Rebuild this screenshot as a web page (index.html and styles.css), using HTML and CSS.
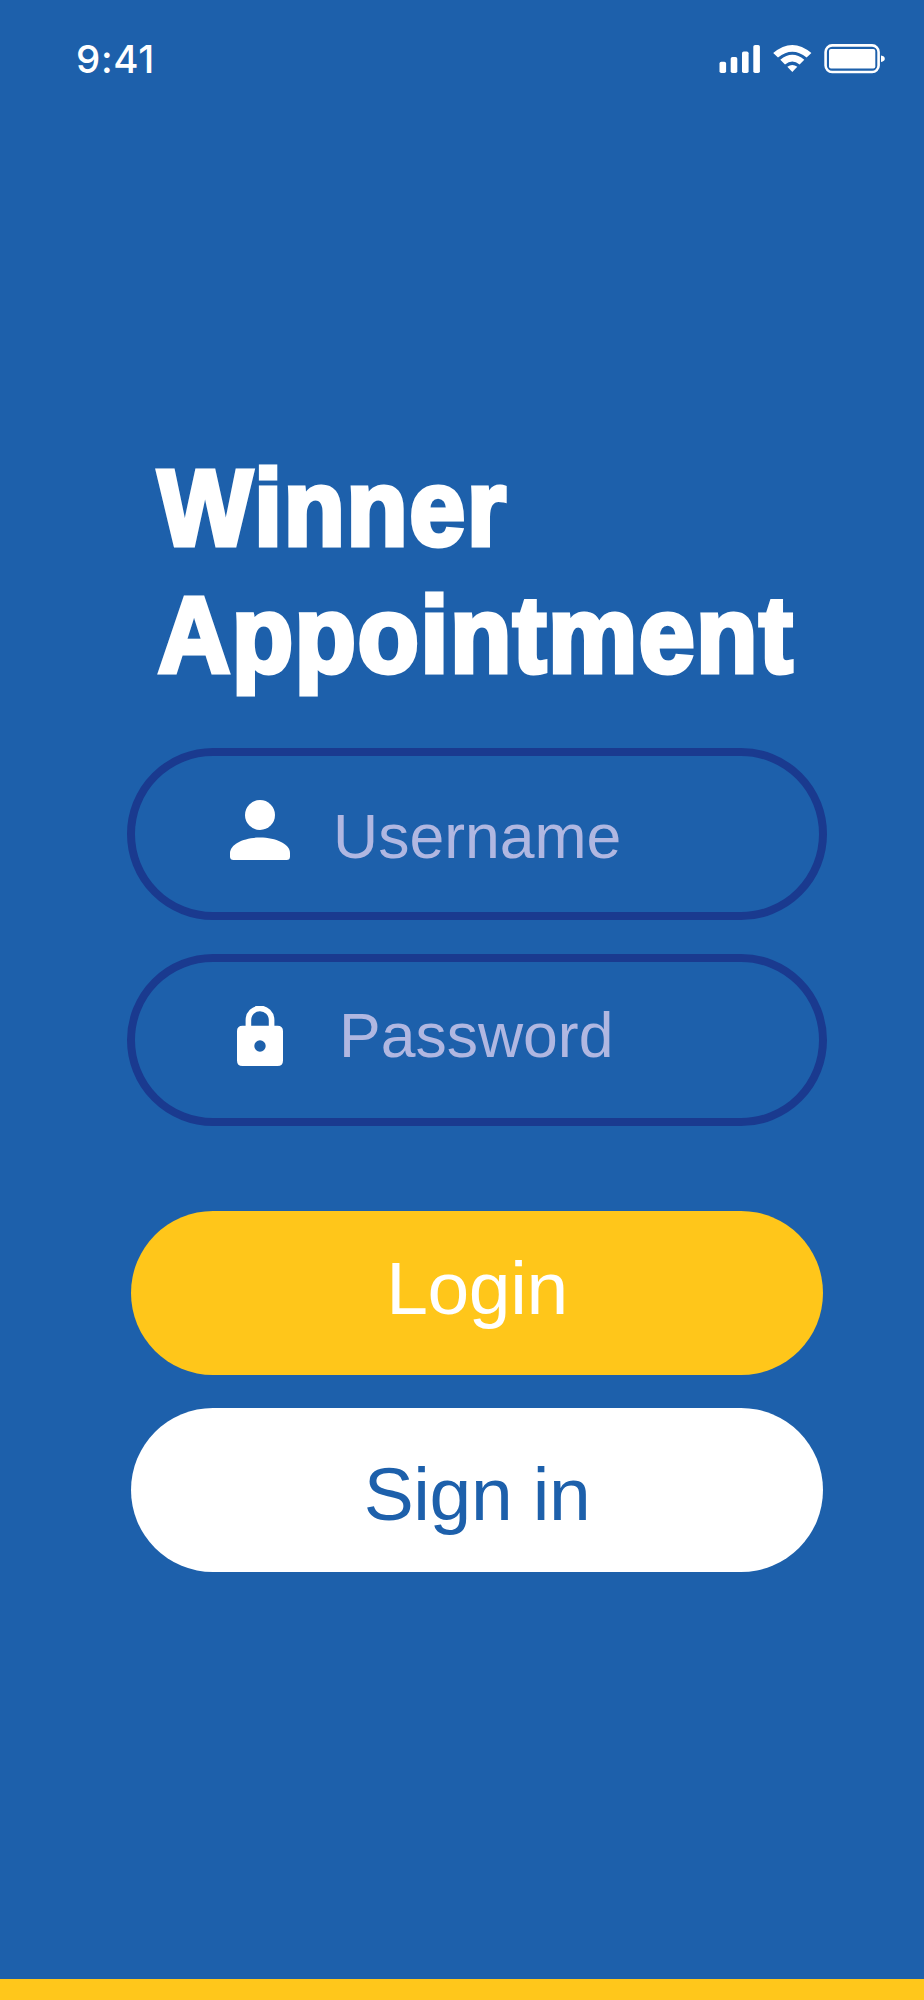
FILE: index.html
```html
<!DOCTYPE html>
<html lang="en">
<head>
  <meta charset="UTF-8" />
  <meta name="viewport" content="width=device-width, initial-scale=1.0" />
  <title>Winner Appointment</title>
  <link rel="stylesheet" href="styles.css">
</head>
<body>
  <div class="screen">
    <header class="status-bar">
      <span class="time">9:41</span>
      <svg class="status-icons" width="168" height="32" viewBox="0 0 168 32" fill="#fff">
        <!-- signal -->
        <rect x="1.5" y="18.7" width="6.6" height="11.3" rx="1.8" />
        <rect x="12.7" y="14" width="6.6" height="16" rx="1.8" />
        <rect x="24" y="8.5" width="6.6" height="21.5" rx="1.8" />
        <rect x="35.3" y="2" width="6.6" height="28" rx="1.8" />
        <!-- wifi -->
        <path d="M55.2 10 Q74.3 -6.2 93.4 10 L88.6 14.6 Q74.3 2.8 60 14.6 Z" />
        <path d="M62.3 16.7 Q74.3 7 86.3 16.7 L81.6 21.4 Q74.3 15.8 67 21.4 Z" />
        <path d="M69.3 23.8 Q74.3 20.2 79.3 23.8 L74.3 29 Z" />
        <!-- battery -->
        <rect x="107.6" y="2.4" width="53" height="26.6" rx="6.5" fill="none" stroke="#fff" stroke-width="2.6" />
        <rect x="111" y="6" width="46.3" height="19.4" rx="2" />
        <path d="M163 12.6 Q166.8 13.2 166.8 15.8 Q166.8 18.4 163 19 Z" />
      </svg>
    </header>

    <h1 class="title">
      <span class="line">Winner</span>
      <span class="line">Appointment</span>
    </h1>

    <form class="login-form">
      <label class="field">
        <svg class="icon" width="60" height="60" viewBox="0 0 60 60" fill="#fff">
          <circle cx="30" cy="15" r="15" />
          <path d="M0 53 C0 44 14 37.5 30 37.5 S60 44 60 53 V56.5 Q60 60 56.5 60 H3.5 Q0 60 0 56.5 Z" />
        </svg>
        <input type="text" class="username" placeholder="Username" />
      </label>
      <label class="field">
        <svg class="icon" width="60" height="60" viewBox="0 0 60 60">
          <path d="M18.4 22 V14 A11.6 11.6 0 0 1 41.6 14 V22" fill="none" stroke="#fff" stroke-width="5.6" />
          <path d="M12.5 19.7 H47.5 Q53 19.7 53 25.2 V54.5 Q53 60 47.5 60 H12.5 Q7 60 7 54.5 V25.2 Q7 19.7 12.5 19.7 Z M30 34.3 A5.7 5.7 0 1 0 30 45.7 A5.7 5.7 0 1 0 30 34.3 Z" fill="#fff" fill-rule="evenodd" />
        </svg>
        <input type="password" class="password" placeholder="Password" />
      </label>
      <button type="button" class="btn btn-login">Login</button>
      <button type="button" class="btn btn-signin">Sign in</button>
    </form>

    <footer class="bottom-bar"></footer>
  </div>
</body>
</html>
```

FILE: styles.css
```css
* {
  box-sizing: border-box;
}
body {
  margin: 0;
  background-color: #1d60ab;
  color: #fff;
  font-family: "Liberation Sans", Arial, sans-serif;
}
.screen {
  width: 924px;
  height: 2000px;
  display: flex;
  flex-direction: column;
  overflow: hidden;
}

/* Status bar */
.status-bar {
  display: flex;
  justify-content: space-between;
  align-items: flex-start;
  height: 118px;
  padding: 43px 38px 0 76px;
}
.time {
  font-family: Inter, sans-serif;
  font-size: 38.5px;
  font-weight: 500;
  line-height: 32px;
  letter-spacing: 0.7px;
}

/* Title */
.title {
  margin: 326px 0 0 158px;
  font-size: 108px;
  line-height: 127px;
  font-weight: bold;
  letter-spacing: 2px;
}
.line {
  display: block;
  width: max-content;
  transform: scaleX(0.925);
  transform-origin: left;
  font-kerning: none;
  -webkit-text-stroke: 5px #fff;
}

/* Form */
.login-form {
  display: flex;
  flex-direction: column;
  align-items: center;
  margin: 50px 0 0 30px;
}
.field {
  display: flex;
  width: 700px;
  height: 172px;
  margin-bottom: 34px;
  padding-left: 95px;
  border: 8px solid #1a3a8f;
  border-radius: 86px;
}
.icon {
  flex: none;
  margin-top: 44px;
}
.field input {
  width: 400px;
  height: 72px;
  padding: 0;
  border: none;
  outline: none;
  background: none;
  color: #fff;
  font-family: inherit;
  font-size: 62.5px;
}
.field input::placeholder {
  color: #b0b7e1;
}
.field .username {
  margin: 44px 0 0 43px;
}
.field .password {
  margin: 37px 0 0 49px;
}
.btn {
  width: 692px;
  height: 163.6px;
  padding: 0;
  border: none;
  border-radius: 82px;
  font-family: inherit;
  font-size: 75px;
  line-height: 86px;
  letter-spacing: -0.4px;
  cursor: pointer;
}
.btn-login {
  margin-top: 51px;
  padding-bottom: 9px;
  background-color: #ffc61a;
  color: #fff;
}
.btn-signin {
  margin-top: 33.6px;
  padding-top: 8px;
  background-color: #fff;
  color: #1d60ab;
}

.bottom-bar {
  height: 21px;
  margin-top: auto;
  background-color: #ffc71b;
}
```
